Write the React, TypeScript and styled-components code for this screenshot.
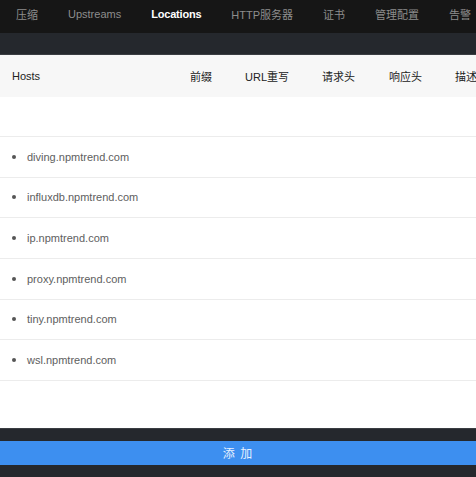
import React from "react";
import styled, { createGlobalStyle } from "styled-components";

const GlobalStyle = createGlobalStyle`
  html, body {
    margin: 0;
    padding: 0;
    background: #25282d;
    font-family: "Helvetica Neue", "Liberation Sans", Arial, "Noto Sans CJK SC", sans-serif;
    overflow: hidden;
  }
`;

const navItems = ["压缩", "Upstreams", "Locations", "HTTP服务器", "证书", "管理配置", "告警"];
const columns = ["前缀", "URL重写", "请求头", "响应头", "描述"];
const hosts = [
  "diving.npmtrend.com",
  "influxdb.npmtrend.com",
  "ip.npmtrend.com",
  "proxy.npmtrend.com",
  "tiny.npmtrend.com",
  "wsl.npmtrend.com",
];

const App = () => {
  return (
    <Page>
      <GlobalStyle />
      <Nav>
        {navItems.map((item) => (
          <NavItem key={item} $active={item === "Locations"}>
            {item}
          </NavItem>
        ))}
      </Nav>
      <SubBar />
      <Table>
        <HeadRow>
          <HostsHead>Hosts</HostsHead>
          {columns.map((c) => (
            <ColHead key={c}>{c}</ColHead>
          ))}
        </HeadRow>
        <Spacer />
        <List>
          {hosts.map((h) => (
            <Row key={h}>
              <Bullet />
              {h}
            </Row>
          ))}
        </List>
        <Bottom />
      </Table>
      <Footer>
        <AddButton>添 加</AddButton>
      </Footer>
    </Page>
  );
};

const Page = styled.div`
  width: 476px;
  height: 477px;
  overflow: hidden;
  background: #25282d;
`;

const Nav = styled.div`
  height: 33px;
  box-sizing: border-box;
  padding: 0 0 5px 16px;
  background: #161616;
  display: flex;
  align-items: center;
  gap: 30px;
  white-space: nowrap;
  overflow: hidden;
`;

const NavItem = styled.div<{ $active?: boolean }>`
  font-size: 11px;
  color: ${(p) => (p.$active ? "#ffffff" : "#8d8d8d")};
  font-weight: ${(p) => (p.$active ? 600 : 400)};
  letter-spacing: ${(p) => (p.$active ? "-0.2px" : "0")};
  flex-shrink: 0;
`;

const SubBar = styled.div`
  height: 21px;
  background: #25282d;
  border-bottom: 1px solid #3a3d42;
`;

const Table = styled.div`
  background: #fff;
`;

const HeadRow = styled.div`
  height: 42px;
  background: #f7f7f7;
  display: flex;
  align-items: center;
  padding-left: 12px;
  white-space: nowrap;
  font-size: 11px;
  color: #222;
`;

const HostsHead = styled.div`
  width: 178px;
  flex-shrink: 0;
`;

const ColHead = styled.div`
  flex-shrink: 0;
  &:nth-child(2) { width: 55px; }
  &:nth-child(3) { width: 77px; }
  &:nth-child(4) { width: 67px; }
  &:nth-child(5) { width: 66px; }
  &:nth-child(6) { width: 60px; }
`;

const Spacer = styled.div`
  height: 39px;
  border-bottom: 1px solid #ececec;
`;

const List = styled.div`
  display: flex;
  flex-direction: column;
`;

const Row = styled.div`
  height: 39.67px;
  border-bottom: 1px solid #ececec;
  display: flex;
  align-items: center;
  padding-left: 12px;
  font-size: 11px;
  color: #5e5e5e;
`;

const Bullet = styled.span`
  width: 4px;
  height: 4px;
  border-radius: 50%;
  background: #555;
  margin-right: 11px;
`;

const Bottom = styled.div`
  height: 47px;
`;

const Footer = styled.div`
  padding-top: 12px;
  background: #25282d;
  border-top: 1px solid #3a3d42;
`;

const AddButton = styled.div`
  height: 24px;
  background: #3d8ff0;
  color: #e8f1ff;
  font-size: 12px;
  display: flex;
  align-items: center;
  justify-content: center;
  letter-spacing: 1px;
`;

export default App;
